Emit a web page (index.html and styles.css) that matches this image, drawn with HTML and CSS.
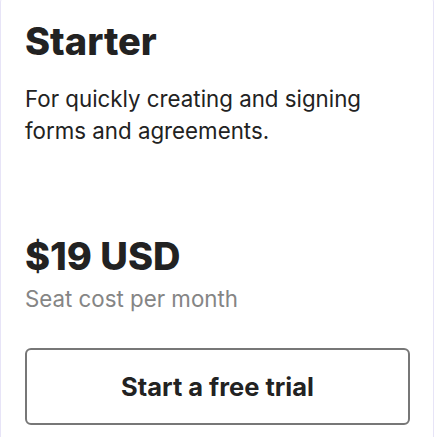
FILE: index.html
```html
<!DOCTYPE html>
<html>
<head>
<meta charset="utf-8">
<link rel="stylesheet" href="styles.css">
</head>
<body>
<div class="card">
  <h2 class="title">Starter</h2>
  <p class="desc">For quickly creating and signing forms and agreements.</p>
  <div class="price">$19 USD</div>
  <div class="note">Seat cost per month</div>
  <a class="btn" href="#">Start a free trial</a>
</div>
</body>
</html>
```

FILE: styles.css
```css
html, body {
  margin: 0;
  padding: 0;
  background: #fff;
}
body {
  font-family: Inter, "Noto Sans", sans-serif;
  color: #222;
  overflow: hidden;
}
.card {
  box-sizing: border-box;
  width: 434px;
  margin-top: -6px;
  height: 460px;
  border: 1px solid #e7e4f7;
  border-radius: 8px;
  padding: 24px 24px 0 24px;
  display: flex;
  flex-direction: column;
}
.title {
  margin: 0;
  font-size: 38px;
  line-height: 44px;
  font-weight: 800;
}
.desc {
  margin: 20px 0 0 0;
  font-size: 22.3px;
  line-height: 32px;
  font-weight: 400;
  width: 370px;
}
.price {
  margin-top: 87px;
  font-size: 38px;
  line-height: 44px;
  font-weight: 800;
}
.note {
  margin-top: 7px;
  font-size: 22.3px;
  line-height: 28px;
  color: #858585;
}
.btn {
  margin-top: 35px;
  box-sizing: border-box;
  width: 385px;
  height: 77px;
  border: 2px solid #777;
  border-radius: 6px;
  display: flex;
  align-items: center;
  justify-content: center;
  font-size: 25.5px;
  font-weight: 700;
  color: #222;
  text-decoration: none;
}
```
